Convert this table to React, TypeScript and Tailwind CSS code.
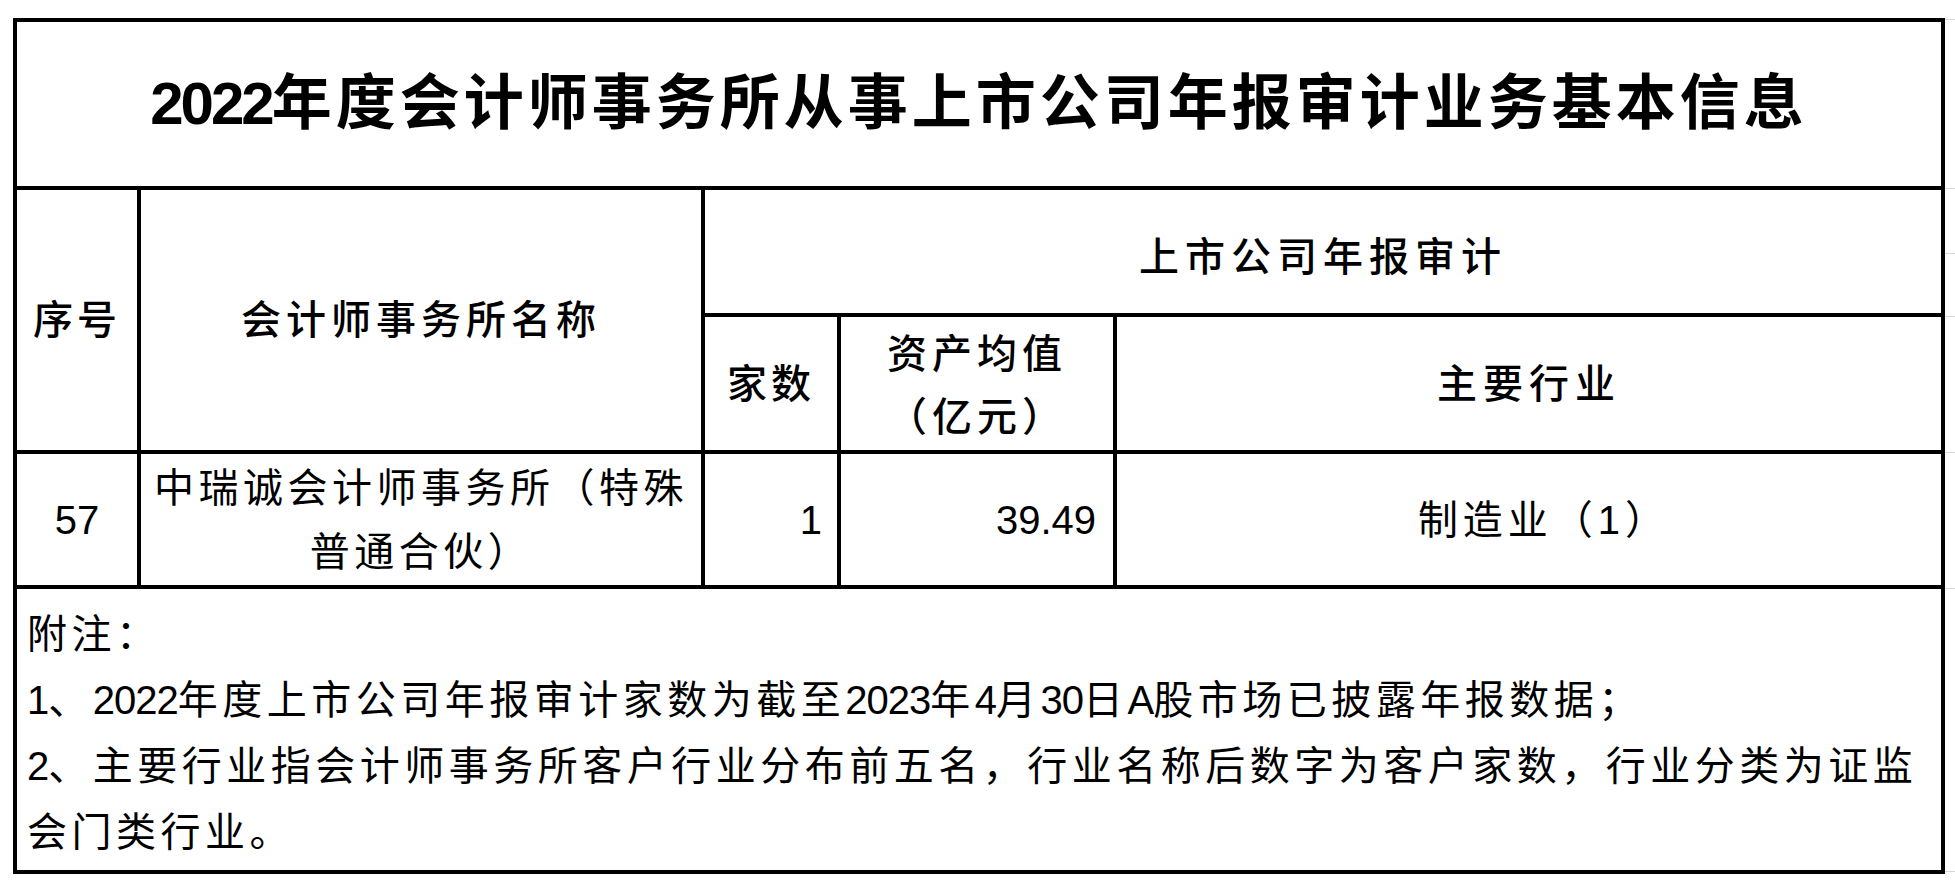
const cell = "border-[4px] border-black p-0 align-middle";

const GridEdge = () => (
  <div className="flex flex-col w-[15px] pt-[1px]">
    <div className="h-[169px] border-t border-[#d6d6d6]" />
    <div className="h-[65px] border-t border-[#d6d6d6]" />
    <div className="h-[63px] border-t border-[#d6d6d6]" />
    <div className="h-[136px] border-t border-[#d6d6d6]" />
    <div className="h-[136px] border-t border-[#d6d6d6]" />
    <div className="h-[284px] border-t border-b border-[#d6d6d6]" />
  </div>
);

const Num = ({ children }: { children: React.ReactNode }) => (
  <span className="tracking-[-1px]">{children}</span>
);

export default function App() {
  return (
    <div
      className="min-h-screen bg-white text-black"
      style={{ fontFamily: '"Liberation Sans", "Noto Sans CJK SC", sans-serif' }}
    >
      <div className="flex pt-[18px] pl-[13px]">
        <table className="table-fixed border-collapse w-[1928px]">
          <colgroup>
            <col className="w-[124px]" />
            <col className="w-[564px]" />
            <col className="w-[136px]" />
            <col className="w-[276px]" />
            <col className="w-[828px]" />
          </colgroup>
          <tbody>
            <tr className="h-[168px]">
              <td colSpan={5} className={`${cell} text-center text-[60px] font-semibold tracking-[4px]`}>
                <span className="tracking-[-3px]">2022</span>年度会计师事务所从事上市公司年报审计业务基本信息
              </td>
            </tr>
            <tr className="h-[127px]">
              <td rowSpan={2} className={`${cell} text-center text-[40px] font-medium tracking-[4px]`}>
                序号
              </td>
              <td rowSpan={2} className={`${cell} text-center text-[40px] font-medium tracking-[5px]`}>
                会计师事务所名称
              </td>
              <td colSpan={3} className={`${cell} text-center text-[40px] font-medium tracking-[6px] pt-[10px]`}>
                上市公司年报审计
              </td>
            </tr>
            <tr className="h-[137px]">
              <td className={`${cell} text-center text-[40px] font-medium tracking-[4px]`}>家数</td>
              <td className={`${cell} text-center text-[40px] font-medium tracking-[5px] leading-[63px] pt-[4px]`}>
                资产均值
                <br />
                （亿元）
              </td>
              <td className={`${cell} text-center text-[40px] font-medium tracking-[6px]`}>主要行业</td>
            </tr>
            <tr className="h-[135px]">
              <td className={`${cell} text-center text-[40px]`}>57</td>
              <td className={`${cell} text-center text-[40px] tracking-[4.5px] leading-[64px]`}>
                中瑞诚会计师事务所（特殊
                <br />
                普通合伙）
              </td>
              <td className={`${cell} text-right text-[40px] pr-[15px]`}>1</td>
              <td className={`${cell} text-right text-[40px] pr-[17px]`}>39.49</td>
              <td className={`${cell} text-center text-[40px] tracking-[5px] pl-[30px]`}>制造业（1）</td>
            </tr>
            <tr className="h-[285px]">
              <td colSpan={5} className={`${cell} align-top pl-[10px] pt-[12px] text-[40px] leading-[66px] tracking-[4.5px]`}>
                <div className="whitespace-nowrap">附注：</div>
                <div className="whitespace-nowrap">
                  <Num>1</Num>、<Num>2022</Num>年度上市公司年报审计家数为截至<Num>2023</Num>年<Num>4</Num>月
                  <Num>30</Num>日<Num>A</Num>股市场已披露年报数据；
                </div>
                <div className="whitespace-nowrap">
                  <Num>2</Num>、主要行业指会计师事务所客户行业分布前五名，行业名称后数字为客户家数，行业分类为证监
                </div>
                <div className="whitespace-nowrap">会门类行业。</div>
              </td>
            </tr>
          </tbody>
        </table>
        <GridEdge />
      </div>
    </div>
  );
}
